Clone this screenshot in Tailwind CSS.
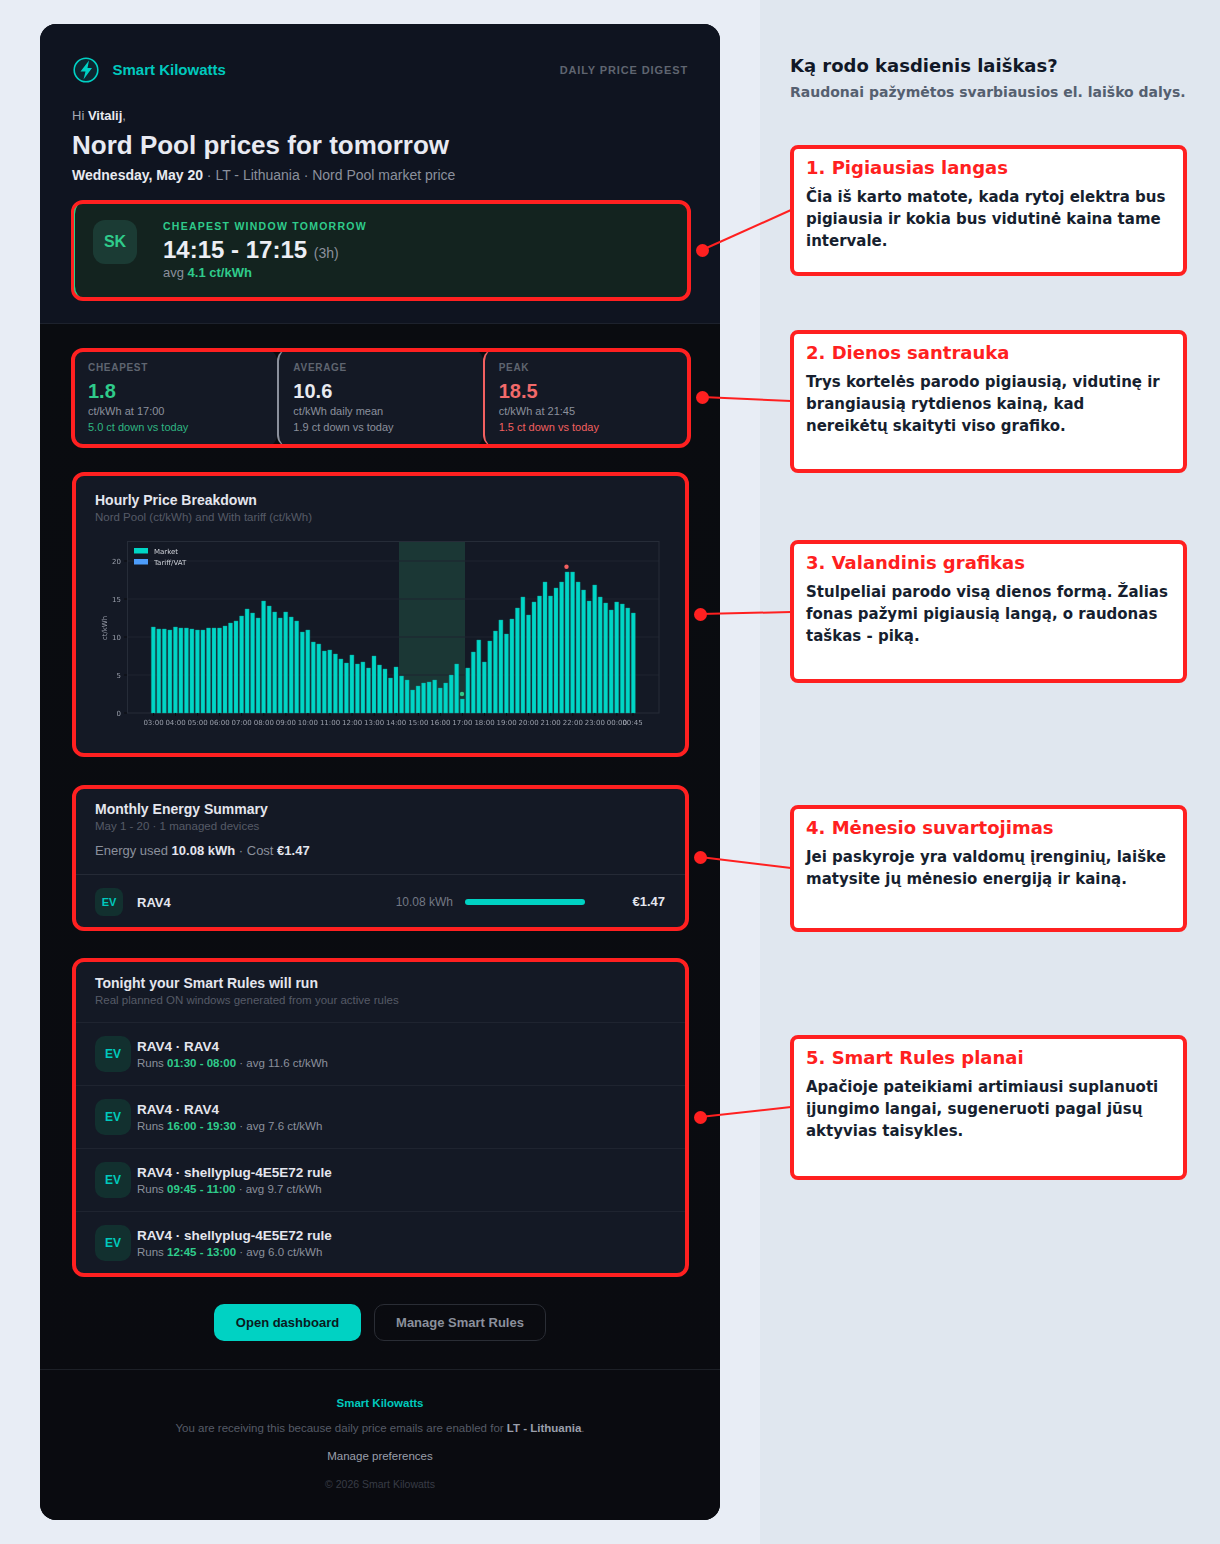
<!DOCTYPE html>
<html lang="lt"><head><meta charset="utf-8"><title>Smart Kilowatts</title>
<script src="https://cdn.jsdelivr.net/npm/@tailwindcss/browser@4"></script></head>
<body class="m-0">
<div class="relative flex w-[1220px] h-[1544px] overflow-hidden font-['Liberation_Sans',Arial,sans-serif]">
  <!-- LEFT -->
  <div class="w-[760px] h-full bg-[#e8edf5] pl-10 pt-6">
    <div class="w-[680px] h-[1496px] rounded-2xl overflow-hidden bg-[#0a0c11] flex flex-col">
      <!-- header -->
      <header class="h-[300px] bg-[#0f1420] border-b border-[#1d222d] px-8 pt-8 shrink-0">
        <div class="flex items-center justify-between h-7">
          <div class="flex items-center gap-[12.5px]">
            <svg width="28" height="28" viewBox="0 0 28 28"><circle cx="14" cy="14" r="11.8" fill="#00d1c4" fill-opacity="0.1" stroke="#00d1c4" stroke-width="1.6"/><path d="M17 4.5 L8.5 15.5 H13.5 L11.5 23.5 L20 12 H15.5 Z" fill="#00d1c4"/></svg>
            <span class="text-[15px] font-bold text-[#00c9bd]">Smart Kilowatts</span>
          </div>
          <span class="text-[11px] font-bold tracking-[0.08em] text-[#5f6570]">DAILY PRICE DIGEST</span>
        </div>
        <p class="mt-[24px] text-[13px] leading-[16px] text-[#a3a8b3]">Hi <b class="text-[#e8eaf0]">Vitalij</b>,</p>
        <h1 class="mt-[4px] text-[26px] leading-[34px] font-bold text-[#e8eaf2]">Nord Pool prices for tomorrow</h1>
        <p class="mt-[3px] text-[14px] leading-[20px] text-[#8b909c]"><b class="text-[#e8eaf0]">Wednesday, May 20</b> · LT - Lithuania · Nord Pool market price</p>
        <div class="relative mt-[17px] h-[96px] rounded-xl bg-[#13231f] border-l-[3px] border-[#2dd08a] flex pl-[18px] pt-[17px]">
          <div class="w-11 h-11 mt-px rounded-xl bg-[#1b3b34] flex items-center justify-center text-[16px] font-bold text-[#2fcb8b] shrink-0">SK</div>
          <div class="ml-[26px]">
            <p class="text-[10.5px] leading-[14px] font-bold tracking-[0.12em] text-[#2fcb8b]">CHEAPEST WINDOW TOMORROW</p>
            <p class="mt-[3px] text-[24px] leading-[28px] font-bold text-[#eceef4]">14:15 - 17:15 <span class="text-[14px] font-normal text-[#8b909c]">(3h)</span></p>
            <p class="-mt-[2px] text-[13px] leading-[16px] text-[#8b909c]">avg <b class="text-[#2fcb8b]">4.1 ct/kWh</b></p>
          </div>
          <div class="absolute -left-[4px] -right-[3px] -top-[2px] -bottom-[3px] rounded-xl border-[4px] border-l-[3px] border-[#ff2020]"></div>
        </div>
      </header>
      <!-- body -->
      <main class="flex-1 px-8 pt-[25px] bg-gradient-to-b from-[#0a0c10] to-[#0a0b10]">
        <div class="relative grid grid-cols-3 h-[98px]">
          <div class="rounded-xl bg-[#141925] border-l-2 border-[#2dd08a] pl-[14px] pt-[13px]">
            <p class="text-[10px] leading-[12px] font-bold tracking-[0.07em] text-[#5f6570]">CHEAPEST</p>
            <p class="mt-[6px] text-[20px] leading-[22px] font-bold text-[#2fcb8b]">1.8</p>
            <p class="mt-[1px] text-[11px] leading-[16px] text-[#8b909c]">ct/kWh at 17:00</p>
            <p class="text-[11px] leading-[16px] text-[#2fb582]">5.0 ct down vs today</p>
          </div>
          <div class="rounded-xl bg-[#141925] border-l-2 border-[#8b909c] pl-[14px] pt-[13px]">
            <p class="text-[10px] leading-[12px] font-bold tracking-[0.07em] text-[#5f6570]">AVERAGE</p>
            <p class="mt-[6px] text-[20px] leading-[22px] font-bold text-[#e8eaf0]">10.6</p>
            <p class="mt-[1px] text-[11px] leading-[16px] text-[#8b909c]">ct/kWh daily mean</p>
            <p class="text-[11px] leading-[16px] text-[#8b909c]">1.9 ct down vs today</p>
          </div>
          <div class="rounded-xl bg-[#141925] border-l-2 border-[#f26060] pl-[14px] pt-[13px]">
            <p class="text-[10px] leading-[12px] font-bold tracking-[0.07em] text-[#5f6570]">PEAK</p>
            <p class="mt-[6px] text-[20px] leading-[22px] font-bold text-[#f26a6a]">18.5</p>
            <p class="mt-[1px] text-[11px] leading-[16px] text-[#8b909c]">ct/kWh at 21:45</p>
            <p class="text-[11px] leading-[16px] text-[#f26060]">1.5 ct down vs today</p>
          </div>
          <div class="absolute -left-[1px] -right-[3px] -top-[1px] -bottom-[1px] rounded-xl border-[4px] border-[#ff2020]"></div>
        </div>

        <section class="relative mt-[25px] h-[285px] rounded-xl bg-[#141925] pt-[19px]">
          <h2 class="px-[23px] text-[14px] leading-[18px] font-bold text-[#e4e6ee]">Hourly Price Breakdown</h2>
          <p class="px-[23px] text-[11.5px] leading-[16px] text-[#565b67]">Nord Pool (ct/kWh) and With tariff (ct/kWh)</p>
          <svg class="block ml-[18px] mt-[10px] blur-[0.25px]" width="580" height="200" viewBox="90 535 580 200" font-family="DejaVu Sans" font-size="7" fill="#9a9fab">
            <rect x="399" y="541.5" width="66" height="171.5" fill="#1b3735"/>
            <path d="M128 561H659M128 599H659M128 637H659M128 675H659" stroke="#1f2531" stroke-width="1" fill="none"/>
            <rect x="127.5" y="541.5" width="531.5" height="171.5" fill="none" stroke="#262c38"/>
            <path fill="#00d6c6" stroke="#0f9a94" stroke-width="0.4" d="M151.3 713v-86h4v86zM156.8 713v-84h4v84zM162.3 713v-84h4v84zM167.9 713v-83h4v83zM173.4 713v-86h4v86zM178.9 713v-85h4v85zM184.4 713v-85h4v85zM189.9 713v-84h4v84zM195.4 713v-83h4v83zM200.9 713v-83h4v83zM206.5 713v-85h4v85zM212 713v-85h4v85zM217.5 713v-85h4v85zM223 713v-87h4v87zM228.5 713v-90h4v90zM234 713v-92h4v92zM239.6 713v-97h4v97zM245.1 713v-104h4v104zM250.6 713v-100h4v100zM256.1 713v-95h4v95zM261.6 713v-112h4v112zM267.2 713v-107h4v107zM272.7 713v-101h4v101zM278.2 713v-95h4v95zM283.7 713v-101h4v101zM289.2 713v-96h4v96zM294.7 713v-92h4v92zM300.3 713v-81h4v81zM305.8 713v-83h4v83zM311.3 713v-71h4v71zM316.8 713v-69h4v69zM322.3 713v-62h4v62zM327.8 713v-63h4v63zM333.4 713v-59h4v59zM338.9 713v-54h4v54zM344.4 713v-50h4v50zM349.9 713v-58h4v58zM355.4 713v-49h4v49zM360.9 713v-51h4v51zM366.5 713v-45h4v45zM372 713v-57h4v57zM377.5 713v-48h4v48zM383 713v-44h4v44zM388.5 713v-35h4v35zM394 713v-46h4v46zM399.6 713v-37h4v37zM405.1 713v-33h4v33zM410.6 713v-23h4v23zM416.1 713v-27h4v27zM421.6 713v-30h4v30zM427.1 713v-31h4v31zM432.7 713v-33h4v33zM438.2 713v-25h4v25zM443.7 713v-30h4v30zM449.2 713v-38h4v38zM454.7 713v-49h4v49zM460.3 713v-14h4v14zM465.8 713v-45h4v45zM471.3 713v-61h4v61zM476.8 713v-73h4v73zM482.3 713v-51h4v51zM487.8 713v-72h4v72zM493.4 713v-82h4v82zM498.9 713v-93h4v93zM504.4 713v-79h4v79zM509.9 713v-94h4v94zM515.4 713v-105h4v105zM520.9 713v-116h4v116zM526.5 713v-98h4v98zM532 713v-111h4v111zM537.5 713v-117h4v117zM543 713v-131h4v131zM548.5 713v-117h4v117zM554 713v-125h4v125zM559.6 713v-131h4v131zM565.1 713v-141h4v141zM570.6 713v-141h4v141zM576.1 713v-131h4v131zM581.6 713v-123h4v123zM587.1 713v-112h4v112zM592.7 713v-128h4v128zM598.2 713v-116h4v116zM603.7 713v-110h4v110zM609.2 713v-103h4v103zM614.7 713v-111h4v111zM620.3 713v-109h4v109zM625.8 713v-105h4v105zM631.3 713v-100h4v100z"/>
            <circle cx="566.5" cy="566.8" r="2.2" fill="#f26060"/>
            <circle cx="462" cy="694" r="2.2" fill="#2fcb8b"/>
            <path stroke="#0a0c11" d="M153.5 713v3M175.5 713v3M197.6 713v3M219.7 713v3M241.7 713v3M263.8 713v3M285.9 713v3M307.9 713v3M330 713v3M352.1 713v3M374.2 713v3M396.2 713v3M418.3 713v3M440.4 713v3M462.4 713v3M484.5 713v3M506.6 713v3M528.6 713v3M550.7 713v3M572.8 713v3M594.8 713v3M616.9 713v3M633 713v3M124 561h3M124 599h3M124 637h3M124 675h3M124 713h3"/>
            <rect x="134" y="548" width="14" height="5.5" fill="#00d6c6"/>
            <rect x="134" y="559" width="14" height="5.5" fill="#4d9dfb"/>
            <text x="154" y="553.5" fill="#d0d3da">Market</text>
            <text x="154" y="564.5" fill="#d0d3da">Tariff/VAT</text>
            <g text-anchor="end"><text x="121" y="564">20</text><text x="121" y="602">15</text><text x="121" y="640">10</text><text x="121" y="678">5</text><text x="121" y="716">0</text></g>
            <text transform="translate(106.5 628) rotate(-90)" text-anchor="middle">ct/kWh</text>
            <g text-anchor="middle"><text x="153.5" y="725">03:00</text><text x="175.5" y="725">04:00</text><text x="197.6" y="725">05:00</text><text x="219.7" y="725">06:00</text><text x="241.7" y="725">07:00</text><text x="263.8" y="725">08:00</text><text x="285.9" y="725">09:00</text><text x="307.9" y="725">10:00</text><text x="330" y="725">11:00</text><text x="352.1" y="725">12:00</text><text x="374.2" y="725">13:00</text><text x="396.2" y="725">14:00</text><text x="418.3" y="725">15:00</text><text x="440.4" y="725">16:00</text><text x="462.4" y="725">17:00</text><text x="484.5" y="725">18:00</text><text x="506.6" y="725">19:00</text><text x="528.6" y="725">20:00</text><text x="550.7" y="725">21:00</text><text x="572.8" y="725">22:00</text><text x="594.8" y="725">23:00</text><text x="616.9" y="725">00:00</text><text x="632.5" y="725">00:45</text></g>
          </svg>
          <div class="absolute inset-y-0 left-0 -right-px rounded-xl border-[4px] border-[#ff2020]"></div>
        </section>

        <section class="relative mt-[28px] h-[146px] rounded-xl bg-[#141925]">
          <div class="h-[90px] px-[23px] pt-[15px] border-b border-[#252a36]">
            <h2 class="text-[14px] leading-[18px] font-bold text-[#e4e6ee]">Monthly Energy Summary</h2>
            <p class="text-[11.5px] leading-[16px] text-[#565b67]">May 1 - 20 · 1 managed devices</p>
            <p class="mt-[9px] text-[13px] leading-[16px] text-[#8b909c]">Energy used <b class="text-[#e4e6ee]">10.08 kWh</b> · Cost <b class="text-[#e4e6ee]">€1.47</b></p>
          </div>
          <div class="flex items-center px-[23px] pt-[13px]">
            <div class="w-7 h-7 rounded-lg bg-[#12302f] flex items-center justify-center text-[11px] font-bold text-[#00c9bd]">EV</div>
            <span class="ml-[14px] mt-px text-[13px] font-bold text-[#e4e6ee]">RAV4</span>
            <span class="ml-auto text-[12px] text-[#737884]">10.08 kWh</span>
            <div class="ml-3 w-[120px] h-[6px] rounded-full bg-[#00d2c3]"></div>
            <b class="w-[80px] text-right text-[13px] text-[#e4e6ee]">€1.47</b>
          </div>
          <div class="absolute inset-y-0 left-0 -right-px rounded-xl border-[4px] border-[#ff2020]"></div>
        </section>

        <section class="relative mt-[27px] h-[319px] rounded-xl bg-[#141925]">
          <div class="h-[64px] px-[23px] pt-[16px]">
            <h2 class="text-[14px] leading-[18px] font-bold text-[#e4e6ee]">Tonight your Smart Rules will run</h2>
            <p class="text-[11.5px] leading-[16px] text-[#565b67]">Real planned ON windows generated from your active rules</p>
          </div>
          <div class="h-[63px] border-t border-[#1f2430] px-[23px] flex items-center gap-[6px]">
            <div class="w-9 h-9 rounded-[10px] bg-[#12302f] flex items-center justify-center text-[12px] font-bold text-[#00c9bd]">EV</div>
            <div><p class="text-[13.5px] leading-[17px] font-bold text-[#e4e6ee]">RAV4 · RAV4</p><p class="text-[11.5px] leading-[16px] text-[#8b909c]">Runs <b class="text-[#2fcb8b]">01:30 - 08:00</b> · avg 11.6 ct/kWh</p></div>
          </div>
          <div class="h-[63px] border-t border-[#1f2430] px-[23px] flex items-center gap-[6px]">
            <div class="w-9 h-9 rounded-[10px] bg-[#12302f] flex items-center justify-center text-[12px] font-bold text-[#00c9bd]">EV</div>
            <div><p class="text-[13.5px] leading-[17px] font-bold text-[#e4e6ee]">RAV4 · RAV4</p><p class="text-[11.5px] leading-[16px] text-[#8b909c]">Runs <b class="text-[#2fcb8b]">16:00 - 19:30</b> · avg 7.6 ct/kWh</p></div>
          </div>
          <div class="h-[63px] border-t border-[#1f2430] px-[23px] flex items-center gap-[6px]">
            <div class="w-9 h-9 rounded-[10px] bg-[#12302f] flex items-center justify-center text-[12px] font-bold text-[#00c9bd]">EV</div>
            <div><p class="text-[13.5px] leading-[17px] font-bold text-[#e4e6ee]">RAV4 · shellyplug-4E5E72 rule</p><p class="text-[11.5px] leading-[16px] text-[#8b909c]">Runs <b class="text-[#2fcb8b]">09:45 - 11:00</b> · avg 9.7 ct/kWh</p></div>
          </div>
          <div class="h-[63px] border-t border-[#1f2430] px-[23px] flex items-center gap-[6px]">
            <div class="w-9 h-9 rounded-[10px] bg-[#12302f] flex items-center justify-center text-[12px] font-bold text-[#00c9bd]">EV</div>
            <div><p class="text-[13.5px] leading-[17px] font-bold text-[#e4e6ee]">RAV4 · shellyplug-4E5E72 rule</p><p class="text-[11.5px] leading-[16px] text-[#8b909c]">Runs <b class="text-[#2fcb8b]">12:45 - 13:00</b> · avg 6.0 ct/kWh</p></div>
          </div>
          <div class="absolute inset-y-0 left-0 -right-px rounded-xl border-[4px] border-[#ff2020]"></div>
        </section>

        <div class="mt-[27px] flex justify-center gap-[13px]">
          <a class="h-[37px] w-[147px] rounded-[10px] bg-[#00d2c3] flex items-center justify-center text-[13px] font-bold text-[#0a1a20]">Open dashboard</a>
          <a class="h-[37px] w-[172px] rounded-[10px] border border-[#2a2d35] flex items-center justify-center text-[13px] font-bold text-[#8b909c]">Manage Smart Rules</a>
        </div>
      </main>
      <footer class="h-[151px] border-t border-[#1d2027] bg-[#0a0b10] pt-[26px] text-center shrink-0">
        <p class="text-[11.5px] leading-[14px] font-bold text-[#00c9bd]">Smart Kilowatts</p>
        <p class="mt-[11px] text-[11.5px] leading-[14px] text-[#565b67]">You are receiving this because daily price emails are enabled for <b class="text-[#9a9fab]">LT - Lithuania</b>.</p>
        <p class="mt-[14px] text-[11.5px] leading-[14px] text-[#9a9fab]">Manage preferences</p>
        <p class="mt-[14px] text-[10.5px] leading-[14px] text-[#383c46]">© 2026 Smart Kilowatts</p>
      </footer>
    </div>
  </div>
  <!-- RIGHT -->
  <aside class="w-[460px] h-full bg-[#e0e7ef] pl-[30px] pr-[33px] pt-[54px] font-['DejaVu_Sans',sans-serif]">
    <h2 class="text-[18px] leading-[24px] font-bold text-[#111827]">Ką rodo kasdienis laiškas?</h2>
    <p class="mt-[4px] text-[14px] leading-[20px] font-bold text-[#556070] whitespace-nowrap">Raudonai pažymėtos svarbiausios el. laiško dalys.</p>

    <div class="mt-[43px] h-[131px] rounded-lg border-[4px] border-[#ff2020] bg-white pl-3 pr-[14px] pt-[7px]">
      <h3 class="text-[18px] leading-[24px] font-bold text-[#ff2020]">1. Pigiausias langas</h3>
      <p class="mt-[6px] text-[15px] leading-[22px] font-bold text-[#171f2f]">Čia iš karto matote, kada rytoj elektra bus pigiausia ir kokia bus vidutinė kaina tame intervale.</p>
    </div>
    <div class="mt-[54px] h-[143px] rounded-lg border-[4px] border-[#ff2020] bg-white pl-3 pr-[14px] pt-[7px]">
      <h3 class="text-[18px] leading-[24px] font-bold text-[#ff2020]">2. Dienos santrauka</h3>
      <p class="mt-[6px] text-[15px] leading-[22px] font-bold text-[#171f2f]">Trys kortelės parodo pigiausią, vidutinę ir brangiausią rytdienos kainą, kad nereikėtų skaityti viso grafiko.</p>
    </div>
    <div class="mt-[67px] h-[143px] rounded-lg border-[4px] border-[#ff2020] bg-white pl-3 pr-[14px] pt-[7px]">
      <h3 class="text-[18px] leading-[24px] font-bold text-[#ff2020]">3. Valandinis grafikas</h3>
      <p class="mt-[6px] text-[15px] leading-[22px] font-bold text-[#171f2f]">Stulpeliai parodo visą dienos formą. Žalias fonas pažymi pigiausią langą, o raudonas taškas - piką.</p>
    </div>
    <div class="mt-[122px] h-[127px] rounded-lg border-[4px] border-[#ff2020] bg-white pl-3 pr-[14px] pt-[7px]">
      <h3 class="text-[18px] leading-[24px] font-bold text-[#ff2020]">4. Mėnesio suvartojimas</h3>
      <p class="mt-[6px] text-[15px] leading-[22px] font-bold text-[#171f2f]">Jei paskyroje yra valdomų įrenginių, laiške matysite jų mėnesio energiją ir kainą.</p>
    </div>
    <div class="mt-[103px] h-[145px] rounded-lg border-[4px] border-[#ff2020] bg-white pl-3 pr-[14px] pt-[7px]">
      <h3 class="text-[18px] leading-[24px] font-bold text-[#ff2020]">5. Smart Rules planai</h3>
      <p class="mt-[6px] text-[15px] leading-[22px] font-bold text-[#171f2f]">Apačioje pateikiami artimiausi suplanuoti įjungimo langai, sugeneruoti pagal jūsų aktyvias taisykles.</p>
    </div>
  </aside>
  <!-- connectors -->
  <svg class="absolute inset-0 pointer-events-none" width="1220" height="1544" viewBox="0 0 1220 1544">
    <g stroke="#ff2020" stroke-width="2"><line x1="702" y1="250" x2="791" y2="210"/><line x1="702" y1="397" x2="791" y2="401"/><line x1="700" y1="614" x2="791" y2="612"/><line x1="700" y1="857" x2="791" y2="868"/><line x1="700" y1="1117" x2="791" y2="1107"/></g>
    <g fill="#ff2020"><circle cx="702.5" cy="250.5" r="6.5"/><circle cx="702.5" cy="397.5" r="6.5"/><circle cx="700.5" cy="614.5" r="6.5"/><circle cx="700.5" cy="857.5" r="6.5"/><circle cx="700.5" cy="1117.5" r="6.5"/></g>
  </svg>
</div>
</body></html>
